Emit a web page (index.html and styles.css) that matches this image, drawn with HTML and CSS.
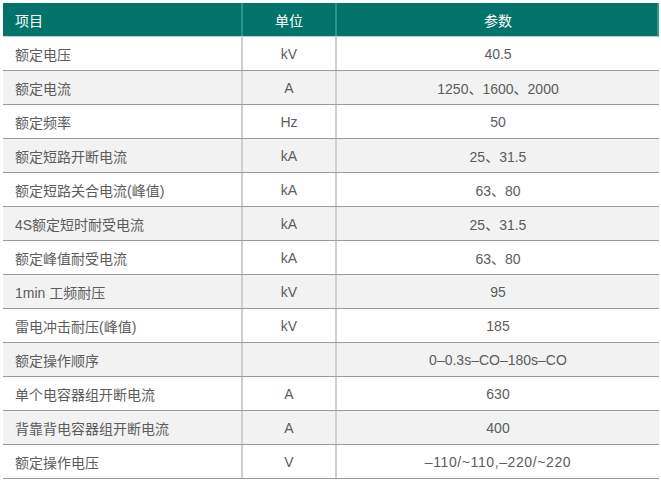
FILE: index.html
```html
<!DOCTYPE html>
<html lang="zh">
<head>
<meta charset="utf-8">
<link rel="stylesheet" href="styles.css">
</head>
<body>
<div class="spec">
  <div class="row head">
    <div class="cell name">项目</div>
    <div class="cell">单位</div>
    <div class="cell">参数</div>
  </div>
  <div class="row"><div class="cell name">额定电压</div><div class="cell">kV</div><div class="cell">40.5</div></div>
  <div class="row alt"><div class="cell name">额定电流</div><div class="cell">A</div><div class="cell">1250、1600、2000</div></div>
  <div class="row"><div class="cell name">额定频率</div><div class="cell">Hz</div><div class="cell">50</div></div>
  <div class="row alt"><div class="cell name">额定短路开断电流</div><div class="cell">kA</div><div class="cell">25、31.5</div></div>
  <div class="row"><div class="cell name">额定短路关合电流(峰值)</div><div class="cell">kA</div><div class="cell">63、80</div></div>
  <div class="row alt"><div class="cell name">4S额定短时耐受电流</div><div class="cell">kA</div><div class="cell">25、31.5</div></div>
  <div class="row"><div class="cell name">额定峰值耐受电流</div><div class="cell">kA</div><div class="cell">63、80</div></div>
  <div class="row alt"><div class="cell name">1min 工频耐压</div><div class="cell">kV</div><div class="cell">95</div></div>
  <div class="row"><div class="cell name">雷电冲击耐压(峰值)</div><div class="cell">kV</div><div class="cell">185</div></div>
  <div class="row alt"><div class="cell name">额定操作顺序</div><div class="cell"></div><div class="cell">0–0.3s–CO–180s–CO</div></div>
  <div class="row"><div class="cell name">单个电容器组开断电流</div><div class="cell">A</div><div class="cell">630</div></div>
  <div class="row alt"><div class="cell name">背靠背电容器组开断电流</div><div class="cell">A</div><div class="cell">400</div></div>
  <div class="row"><div class="cell name">额定操作电压</div><div class="cell">V</div><div class="cell wide">–110/~110,–220/~220</div></div>
</div>
</body>
</html>
```
FILE: styles.css
```css
html, body {
  margin: 0;
  padding: 0;
  background: #ffffff;
}
body {
  font-family: "Liberation Sans", "Noto Sans CJK SC", sans-serif;
  font-size: 14px;
  color: #5c5c5c;
}
.spec {
  padding: 3px 0 0 3px;
  width: 656px;
}
.row {
  display: grid;
  grid-template-columns: 238px 94px 324px;
  height: 34px;
  box-sizing: border-box;
  border-bottom: 1px solid #9a9a9a;
  background: #ffffff;
}
.row.alt {
  background: #f2f2f2;
}
.cell {
  display: flex;
  align-items: center;
  justify-content: center;
  padding-top: 1px;
  border-left: 2px solid #cfcfcf;
  white-space: nowrap;
}
.cell.wide {
  letter-spacing: 0.6px;
}
.cell.name {
  justify-content: flex-start;
  padding-left: 12px;
  border-left: none;
}
.row.head {
  background: #02736a;
  color: #ffffff;
  height: 34px;
  border-bottom: 1px solid #a9dcd7;
  border-right: 2px solid #2f9990;
}
.row.head .cell {
  border-left-color: #2a978d;
}
```
